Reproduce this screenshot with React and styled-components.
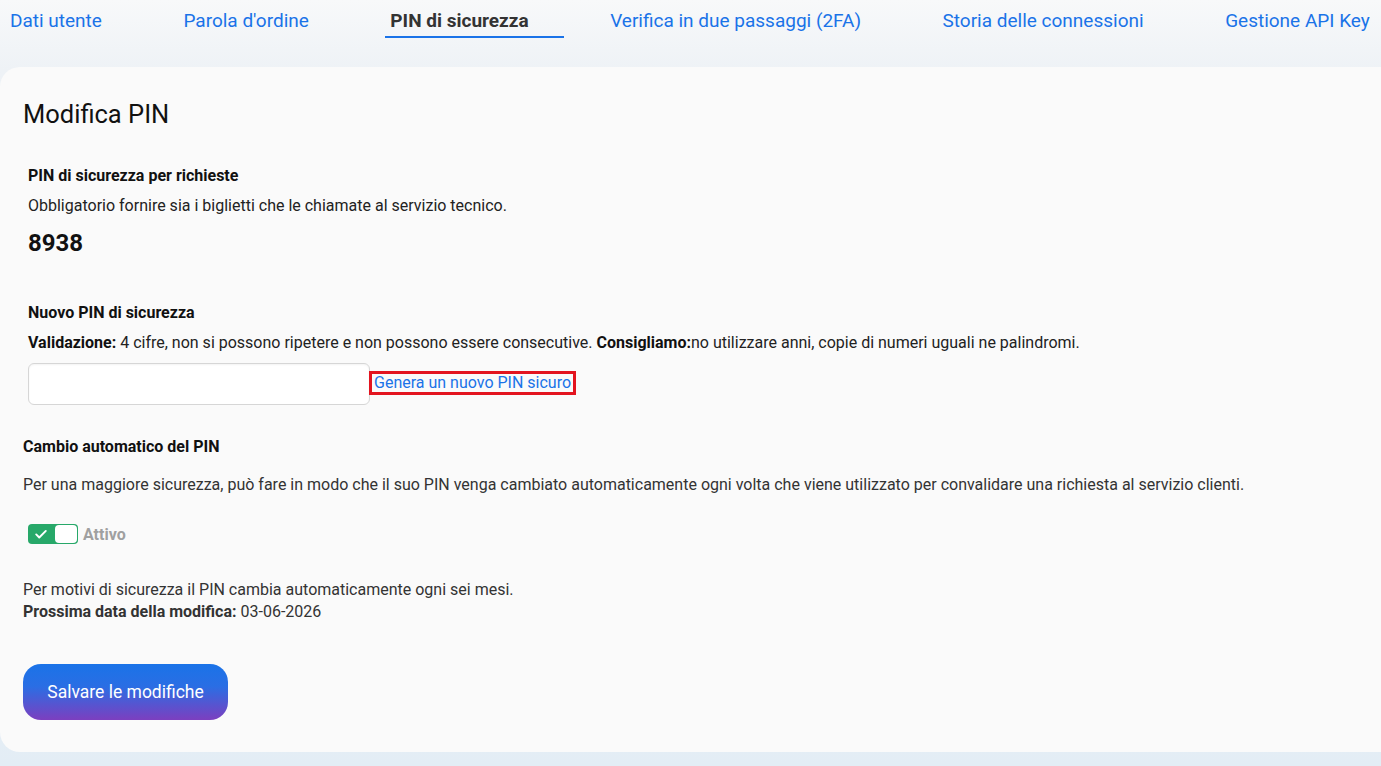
import React from "react";
import styled, { createGlobalStyle } from "styled-components";

const Global = createGlobalStyle`
  html, body { margin: 0; padding: 0; }
  body {
    font-family: Roboto, "Noto Sans", Arial, sans-serif;
    background: linear-gradient(180deg, #f8f9fa 0px, #eef2f6 70px, #e6eef5 700px, #e3edf5 766px);
    min-height: 766px;
    overflow: hidden;
  }
`;

const Page = styled.div`
  width: 1381px;
  height: 766px;
  display: flex;
  flex-direction: column;
`;

const Tabs = styled.nav`
  display: flex;
  gap: 81.5px;
  padding-left: 10px;
  height: 40px;
  align-items: flex-start;
`;

const Tab = styled.a`
  position: relative;
  font-size: 19px;
  line-height: 41px;
  height: 40px;
  white-space: nowrap;
  color: ${(p) => (p.$active ? "#333" : "#1a73e8")};
  font-weight: ${(p) => (p.$active ? 700 : 400)};
  text-decoration: none;
  cursor: pointer;
  ${(p) =>
    p.$active &&
    `&::after {
      content: "";
      position: absolute;
      left: -5px;
      right: -35px;
      bottom: 2px;
      height: 2px;
      background: #1a73e8;
    }`}
`;

const Card = styled.section`
  margin-top: 27px;
  background: #fafafa;
  border-radius: 20px 0 0 20px;
  height: 685px;
  box-sizing: border-box;
  padding: 30px 23px 0 23px;
  display: flex;
  flex-direction: column;
  color: #333;
`;

const Title = styled.h1`
  margin: 0;
  font-size: 25.5px;
  font-weight: 400;
  color: #111;
  line-height: 34px;
`;

const Block = styled.div`
  padding-left: ${(p) => p.$indent || 0}px;
  margin-top: ${(p) => p.$mt || 0}px;
  display: flex;
  flex-direction: column;
`;

const Label = styled.div`
  font-size: 16px;
  font-weight: 700;
  color: #111;
  line-height: 22px;
`;

const Text = styled.div`
  font-size: 16px;
  line-height: 22px;
  color: ${(p) => p.$color || "#222"};
  margin-top: ${(p) => p.$mt || 0}px;
  b { font-weight: 700; color: ${(p) => p.$boldColor || "#111"}; }
`;

const Pin = styled.div`
  font-size: 24px;
  font-weight: 700;
  color: #111;
  line-height: 30px;
  margin-top: 11px;
`;

const InputRow = styled.div`
  display: flex;
  align-items: center;
  margin-top: 9px;
`;

const Input = styled.input`
  width: 342px;
  height: 42px;
  box-sizing: border-box;
  border: 1px solid #d6d6d6;
  border-radius: 6px;
  background: #fff;
  box-shadow: inset 0 1px 2px rgba(0, 0, 0, 0.05);
  outline: none;
  font-family: inherit;
  font-size: 16px;
  padding: 0 10px;
`;

const GenLink = styled.a`
  margin-left: -1px;
  margin-top: -2px;
  border: 3px solid #e3141f;
  padding: 0 2px;
  font-size: 16px;
  line-height: 18px;
  color: #1a73e8;
  cursor: pointer;
  white-space: nowrap;
`;

const ToggleRow = styled.div`
  display: flex;
  align-items: center;
  gap: 5px;
  margin-top: 28px;
  padding-left: 5px;
`;

const Switch = styled.div`
  width: 50px;
  height: 20px;
  box-sizing: border-box;
  background: #27a869;
  border-radius: 4px;
  display: flex;
  align-items: center;
  justify-content: space-between;
  padding: 1px;
`;

const Knob = styled.div`
  width: 22px;
  height: 18px;
  background: #fff;
  border-radius: 4px;
`;

const Check = styled.svg`
  width: 14px;
  height: 14px;
  margin-left: 5px;
`;

const ToggleLabel = styled.span`
  font-size: 16px;
  font-weight: 700;
  color: #a0a0a0;
`;

const SaveButton = styled.button`
  margin-top: 41px;
  align-self: flex-start;
  width: 205px;
  height: 56px;
  border: none;
  border-radius: 18px;
  background: linear-gradient(180deg, #1a73e8 0%, #2a6ee4 40%, #7c3fbf 100%);
  color: #fff;
  font-family: inherit;
  font-size: 17.5px;
  cursor: pointer;
`;

const tabs = [
  "Dati utente",
  "Parola d'ordine",
  "PIN di sicurezza",
  "Verifica in due passaggi (2FA)",
  "Storia delle connessioni",
  "Gestione API Key",
];

export default function App() {
  return (
    <>
      <Global />
      <Page>
        <Tabs>
          {tabs.map((t) => (
            <Tab key={t} $active={t === "PIN di sicurezza"}>
              {t}
            </Tab>
          ))}
        </Tabs>
        <Card>
          <Title>Modifica PIN</Title>
          <Block $indent={5} $mt={34}>
            <Label>PIN di sicurezza per richieste</Label>
            <Text $mt={8}>Obbligatorio fornire sia i biglietti che le chiamate al servizio tecnico.</Text>
            <Pin>8938</Pin>
          </Block>
          <Block $indent={5} $mt={44}>
            <Label>Nuovo PIN di sicurezza</Label>
            <Text $mt={8}>
              <b>Validazione:</b> 4 cifre, non si possono ripetere e non possono essere consecutive.{" "}
              <b>Consigliamo:</b>no utilizzare anni, copie di numeri uguali ne palindromi.
            </Text>
            <InputRow>
              <Input type="text" />
              <GenLink>Genera un nuovo PIN sicuro</GenLink>
            </InputRow>
          </Block>
          <Block $mt={31}>
            <Label>Cambio automatico del PIN</Label>
            <Text $mt={16} $color="#333">
              Per una maggiore sicurezza, può fare in modo che il suo PIN venga cambiato automaticamente ogni volta che viene utilizzato per convalidare una richiesta al servizio clienti.
            </Text>
          </Block>
          <ToggleRow>
            <Switch>
              <Check viewBox="0 0 16 16">
                <path d="M2.5 8.5 L6 12 L13.5 4.5" fill="none" stroke="#fff" strokeWidth="2.2" strokeLinecap="round" strokeLinejoin="round" />
              </Check>
              <Knob />
            </Switch>
            <ToggleLabel>Attivo</ToggleLabel>
          </ToggleRow>
          <Block $mt={35}>
            <Text $color="#333">Per motivi di sicurezza il PIN cambia automaticamente ogni sei mesi.</Text>
            <Text $color="#333" $boldColor="#333">
              <b>Prossima data della modifica:</b> 03-06-2026
            </Text>
          </Block>
          <SaveButton>Salvare le modifiche</SaveButton>
        </Card>
      </Page>
    </>
  );
}
